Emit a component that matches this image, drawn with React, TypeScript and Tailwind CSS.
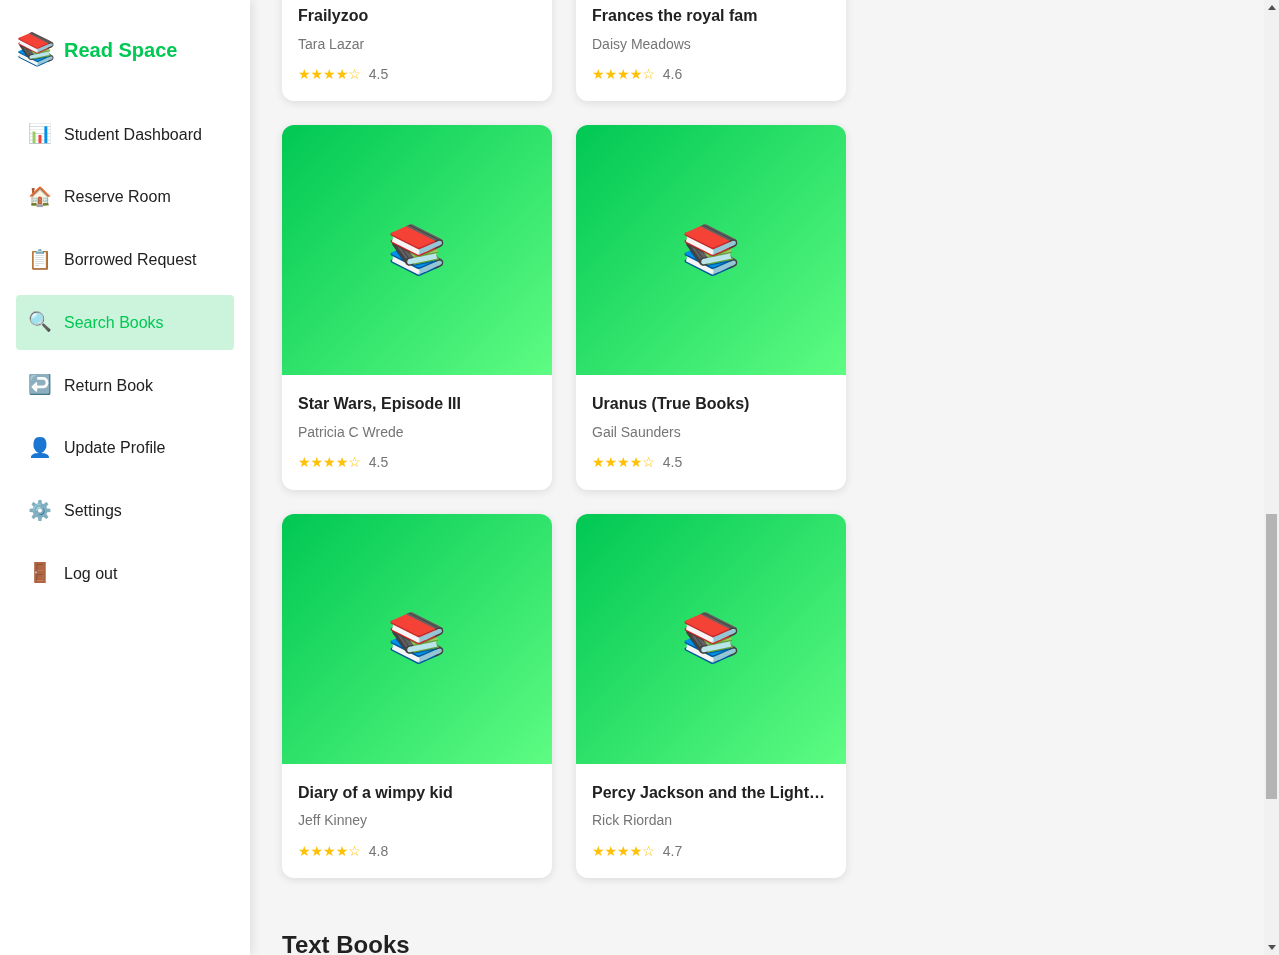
const navItems = [
  { icon: '📊', label: 'Student Dashboard' },
  { icon: '🏠', label: 'Reserve Room' },
  { icon: '📋', label: 'Borrowed Request' },
  { icon: '🔍', label: 'Search Books', active: true },
  { icon: '↩️', label: 'Return Book' },
  { icon: '👤', label: 'Update Profile' },
  { icon: '⚙️', label: 'Settings' },
  { icon: '🚪', label: 'Log out' },
];

const books = [
  { title: 'Frailyzoo', author: 'Tara Lazar', rating: '4.5' },
  { title: 'Frances the royal fam', author: 'Daisy Meadows', rating: '4.6' },
  { title: 'Star Wars, Episode III', author: 'Patricia C Wrede', rating: '4.5' },
  { title: 'Uranus (True Books)', author: 'Gail Saunders', rating: '4.5' },
  { title: 'Diary of a wimpy kid', author: 'Jeff Kinney', rating: '4.8' },
  { title: 'Percy Jackson and the Lightning Thief', author: 'Rick Riordan', rating: '4.7' },
];

function BookCard({ title, author, rating }: { title: string; author: string; rating: string }) {
  return (
    <div className="overflow-hidden rounded-xl bg-white shadow-[0_2px_8px_rgba(0,0,0,0.1)]">
      <div className="flex h-[250px] items-center justify-center bg-[linear-gradient(135deg,#00c853,#5efc82)] pb-[0.4px] text-5xl">
        📚
      </div>
      <div className="px-4 pt-4 pb-[15px]">
        <h3 className="mb-[5.8px] truncate text-base leading-[26px] font-semibold text-[#212121]">{title}</h3>
        <p className="mb-[9px] text-sm leading-[18.2px] text-[#757575]">{author}</p>
        <div className="flex h-[24.4px] items-center gap-2">
          <span className="font-['DejaVu_Sans',sans-serif] text-sm text-[#ffc107]">★★★★☆</span>
          <span className="text-sm text-[#757575]">{rating}</span>
        </div>
      </div>
    </div>
  );
}

export default function App() {
  return (
    <div className="flex h-[955px] overflow-hidden bg-[#f5f5f5] font-['Liberation_Sans',sans-serif] will-change-transform">
      {/* Sidebar */}
      <aside className="z-10 h-full w-[250px] shrink-0 bg-white p-4 shadow-[2px_0_10px_rgba(0,0,0,0.1)]">
        <div className="mt-[9px] mb-[32.225px] flex items-center gap-2">
          <span className="mb-[2px] text-[32px] leading-[48px]">📚</span>
          <span className="text-xl font-bold text-[#00c853]">Read Space</span>
        </div>
        <nav className="flex flex-col gap-2">
          {navItems.map((item) => (
            <div
              key={item.label}
              className={`flex h-[54.75px] items-center gap-3 rounded px-3 ${
                item.active ? 'bg-[#ccf4dd] text-[#00c853]' : 'text-[#212121]'
              }`}
            >
              <span className="w-6 text-center text-[19.2px]">{item.icon}</span>
              <span className="text-base">{item.label}</span>
            </div>
          ))}
        </nav>
      </aside>

      {/* Main content, scrolled part way down */}
      <main className="min-w-0 flex-1 overflow-hidden px-8">
        <div className="-mt-[263.2px] grid grid-cols-[270px_270px] gap-6">
          {books.map((book) => (
            <BookCard key={book.title} {...book} />
          ))}
        </div>
        <h2 className="mt-[51px] text-2xl font-bold text-[#212121]">Text Books</h2>
      </main>

      {/* Scrollbar */}
      <div className="flex h-full w-[15px] shrink-0 flex-col bg-[#f1f1f1]">
        <div className="flex h-[15px] items-center justify-center">
          <div className="h-0 w-0 border-x-[4px] border-b-[5px] border-x-transparent border-b-[#505050]" />
        </div>
        <div className="mt-[499px] ml-[2px] h-[285px] w-[11px] bg-[#b4b4b4]" />
        <div className="mt-auto flex h-[15px] items-center justify-center">
          <div className="h-0 w-0 border-x-[4px] border-t-[5px] border-x-transparent border-t-[#505050]" />
        </div>
      </div>
    </div>
  );
}
